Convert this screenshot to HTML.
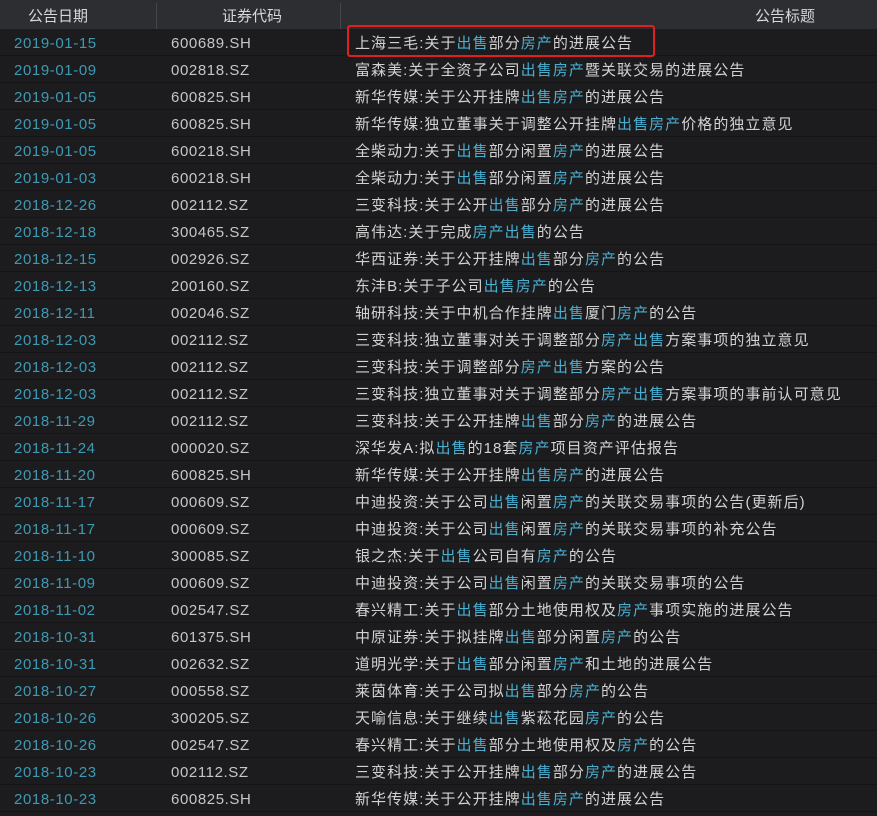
<!DOCTYPE html>
<html><head><meta charset="utf-8"><style>
*{margin:0;padding:0;box-sizing:border-box}
body{width:877px;height:816px;background:#1c1c1e;overflow:hidden;font-family:"Liberation Sans","Noto Sans CJK SC",sans-serif;font-size:15px;position:relative}
.hd{position:absolute;left:0;top:0;width:877px;height:29px;background:#2d2e32;color:#d8d8d8}
.hd span{position:absolute;top:5px}
.dv{position:absolute;top:3px;width:1px;height:26px;background:#45464a}
.r{position:absolute;left:0;width:877px;height:27px;border-bottom:1px solid #151516;line-height:30px;letter-spacing:0.6px}
.d{position:absolute;left:14px;color:#3e9ab4}
.c{position:absolute;left:171px;color:#c6c6c6}
.t{position:absolute;left:355px;color:#d2d2d2;white-space:nowrap;letter-spacing:1.05px}
b{font-weight:normal;color:#4aaed0}
.box{position:absolute;left:347px;top:25px;width:308px;height:32px;border:2px solid #e0201c;border-radius:3px}
</style></head><body>
<div class="hd"><span style="left:28px">公告日期</span><span style="left:222px">证券代码</span><span style="left:755px">公告标题</span></div>
<div class="dv" style="left:156px"></div><div class="dv" style="left:340px"></div>
<div class="r" style="top:29px"><span class="d">2019-01-15</span><span class="c">600689.SH</span><span class="t">上海三毛:关于<b>出售</b>部分<b>房产</b>的进展公告</span></div>
<div class="r" style="top:56px"><span class="d">2019-01-09</span><span class="c">002818.SZ</span><span class="t">富森美:关于全资子公司<b>出售房产</b>暨关联交易的进展公告</span></div>
<div class="r" style="top:83px"><span class="d">2019-01-05</span><span class="c">600825.SH</span><span class="t">新华传媒:关于公开挂牌<b>出售房产</b>的进展公告</span></div>
<div class="r" style="top:110px"><span class="d">2019-01-05</span><span class="c">600825.SH</span><span class="t">新华传媒:独立董事关于调整公开挂牌<b>出售房产</b>价格的独立意见</span></div>
<div class="r" style="top:137px"><span class="d">2019-01-05</span><span class="c">600218.SH</span><span class="t">全柴动力:关于<b>出售</b>部分闲置<b>房产</b>的进展公告</span></div>
<div class="r" style="top:164px"><span class="d">2019-01-03</span><span class="c">600218.SH</span><span class="t">全柴动力:关于<b>出售</b>部分闲置<b>房产</b>的进展公告</span></div>
<div class="r" style="top:191px"><span class="d">2018-12-26</span><span class="c">002112.SZ</span><span class="t">三变科技:关于公开<b>出售</b>部分<b>房产</b>的进展公告</span></div>
<div class="r" style="top:218px"><span class="d">2018-12-18</span><span class="c">300465.SZ</span><span class="t">高伟达:关于完成<b>房产出售</b>的公告</span></div>
<div class="r" style="top:245px"><span class="d">2018-12-15</span><span class="c">002926.SZ</span><span class="t">华西证券:关于公开挂牌<b>出售</b>部分<b>房产</b>的公告</span></div>
<div class="r" style="top:272px"><span class="d">2018-12-13</span><span class="c">200160.SZ</span><span class="t">东沣B:关于子公司<b>出售房产</b>的公告</span></div>
<div class="r" style="top:299px"><span class="d">2018-12-11</span><span class="c">002046.SZ</span><span class="t">轴研科技:关于中机合作挂牌<b>出售</b>厦门<b>房产</b>的公告</span></div>
<div class="r" style="top:326px"><span class="d">2018-12-03</span><span class="c">002112.SZ</span><span class="t">三变科技:独立董事对关于调整部分<b>房产出售</b>方案事项的独立意见</span></div>
<div class="r" style="top:353px"><span class="d">2018-12-03</span><span class="c">002112.SZ</span><span class="t">三变科技:关于调整部分<b>房产出售</b>方案的公告</span></div>
<div class="r" style="top:380px"><span class="d">2018-12-03</span><span class="c">002112.SZ</span><span class="t">三变科技:独立董事对关于调整部分<b>房产出售</b>方案事项的事前认可意见</span></div>
<div class="r" style="top:407px"><span class="d">2018-11-29</span><span class="c">002112.SZ</span><span class="t">三变科技:关于公开挂牌<b>出售</b>部分<b>房产</b>的进展公告</span></div>
<div class="r" style="top:434px"><span class="d">2018-11-24</span><span class="c">000020.SZ</span><span class="t">深华发A:拟<b>出售</b>的18套<b>房产</b>项目资产评估报告</span></div>
<div class="r" style="top:461px"><span class="d">2018-11-20</span><span class="c">600825.SH</span><span class="t">新华传媒:关于公开挂牌<b>出售房产</b>的进展公告</span></div>
<div class="r" style="top:488px"><span class="d">2018-11-17</span><span class="c">000609.SZ</span><span class="t">中迪投资:关于公司<b>出售</b>闲置<b>房产</b>的关联交易事项的公告(更新后)</span></div>
<div class="r" style="top:515px"><span class="d">2018-11-17</span><span class="c">000609.SZ</span><span class="t">中迪投资:关于公司<b>出售</b>闲置<b>房产</b>的关联交易事项的补充公告</span></div>
<div class="r" style="top:542px"><span class="d">2018-11-10</span><span class="c">300085.SZ</span><span class="t">银之杰:关于<b>出售</b>公司自有<b>房产</b>的公告</span></div>
<div class="r" style="top:569px"><span class="d">2018-11-09</span><span class="c">000609.SZ</span><span class="t">中迪投资:关于公司<b>出售</b>闲置<b>房产</b>的关联交易事项的公告</span></div>
<div class="r" style="top:596px"><span class="d">2018-11-02</span><span class="c">002547.SZ</span><span class="t">春兴精工:关于<b>出售</b>部分土地使用权及<b>房产</b>事项实施的进展公告</span></div>
<div class="r" style="top:623px"><span class="d">2018-10-31</span><span class="c">601375.SH</span><span class="t">中原证券:关于拟挂牌<b>出售</b>部分闲置<b>房产</b>的公告</span></div>
<div class="r" style="top:650px"><span class="d">2018-10-31</span><span class="c">002632.SZ</span><span class="t">道明光学:关于<b>出售</b>部分闲置<b>房产</b>和土地的进展公告</span></div>
<div class="r" style="top:677px"><span class="d">2018-10-27</span><span class="c">000558.SZ</span><span class="t">莱茵体育:关于公司拟<b>出售</b>部分<b>房产</b>的公告</span></div>
<div class="r" style="top:704px"><span class="d">2018-10-26</span><span class="c">300205.SZ</span><span class="t">天喻信息:关于继续<b>出售</b>紫菘花园<b>房产</b>的公告</span></div>
<div class="r" style="top:731px"><span class="d">2018-10-26</span><span class="c">002547.SZ</span><span class="t">春兴精工:关于<b>出售</b>部分土地使用权及<b>房产</b>的公告</span></div>
<div class="r" style="top:758px"><span class="d">2018-10-23</span><span class="c">002112.SZ</span><span class="t">三变科技:关于公开挂牌<b>出售</b>部分<b>房产</b>的进展公告</span></div>
<div class="r" style="top:785px"><span class="d">2018-10-23</span><span class="c">600825.SH</span><span class="t">新华传媒:关于公开挂牌<b>出售房产</b>的进展公告</span></div>
<div class="box"></div>
</body></html>
